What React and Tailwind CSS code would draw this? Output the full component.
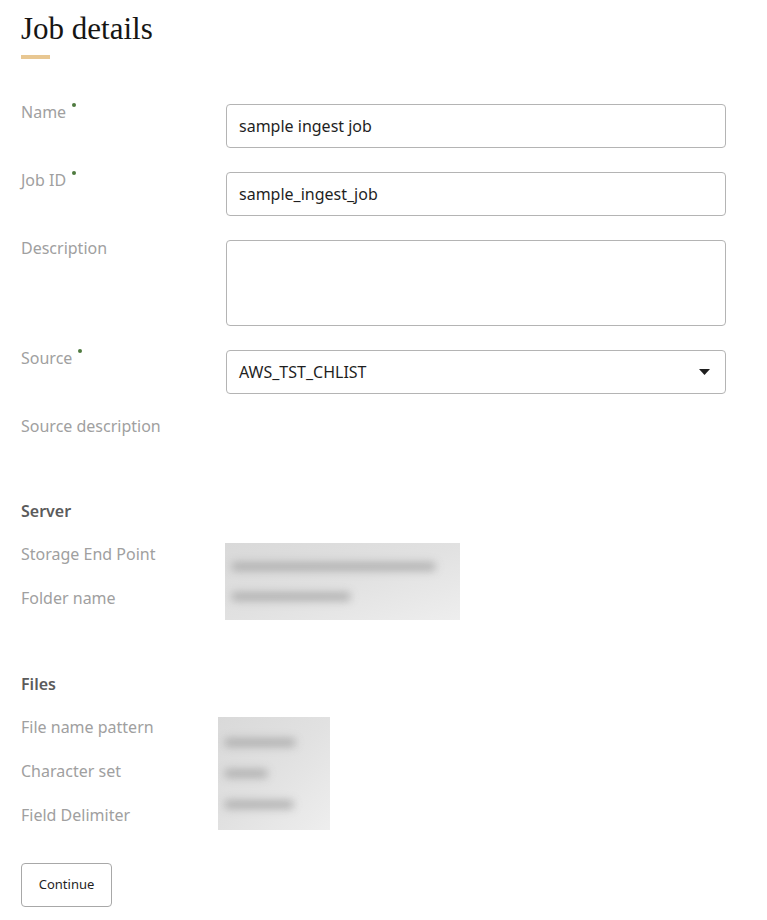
import React from "react";

const labelCls = "text-[16px] leading-[24px] text-[#a0a0a0]";

function Required() {
  return <span className="inline-block w-[4px] h-[4px] rounded-full bg-[#4f7a3f] ml-[6px] align-top mt-[3px]" />;
}

function FieldRow({ label, required, children }) {
  return (
    <div className="flex items-start mb-[20px]">
      <div className={`w-[205px] shrink-0 ${labelCls}`}>
        {label}
        {required && <Required />}
      </div>
      <div className="flex-1 pt-[4px]">{children}</div>
    </div>
  );
}

function TextBox({ value }) {
  return (
    <div className="h-[44px] border border-[#b4b4b4] rounded-[4px] px-[12px] flex items-center text-[16px] text-[#1f1f1f] bg-white">
      {value}
    </div>
  );
}

function Blurred({ className, lines }) {
  return (
    <div className={`bg-gradient-to-br from-[#d9d9d9] via-[#e1e1e1] to-[#eeeeee] overflow-hidden flex flex-col justify-around px-[6px] ${className}`}>
      {lines.map((w, i) => (
        <div key={i} className="h-[9px] rounded-full bg-[#a6a6a6] blur-[4px] opacity-80" style={{ width: w }} />
      ))}
    </div>
  );
}

export default function App() {
  return (
    <div className="bg-white min-h-[920px] pl-[21px] pr-[41px] pt-[10px]" style={{ fontFamily: "'Noto Sans', sans-serif" }}>
      <h1 className="text-[31px] leading-[38px] text-[#161513]" style={{ fontFamily: "'Liberation Serif', serif" }}>
        Job details
      </h1>
      <div className="w-[29px] h-[4px] bg-[#e8c792] mt-[7px] mb-[41px]" />

      <FieldRow label="Name" required>
        <TextBox value="sample ingest job" />
      </FieldRow>
      <FieldRow label="Job ID" required>
        <TextBox value="sample_ingest_job" />
      </FieldRow>
      <FieldRow label="Description">
        <div className="h-[86px] border border-[#b4b4b4] rounded-[4px] bg-white" />
      </FieldRow>
      <FieldRow label="Source" required>
        <div className="h-[44px] border border-[#b4b4b4] rounded-[4px] pl-[12px] pr-[15px] flex items-center justify-between text-[16px] text-[#1f1f1f]">
          <span>AWS_TST_CHLIST</span>
          <svg width="11" height="6" viewBox="0 0 11 6">
            <path d="M0 0h11L5.5 6z" fill="#1f1f1f" />
          </svg>
        </div>
      </FieldRow>
      <div className={labelCls}>Source description</div>

      <div className="mt-[61px] text-[16px] leading-[24px] font-semibold text-[#5b5b5b]">Server</div>
      <div className="flex items-start mt-[9px]">
        <div className="w-[204px] shrink-0">
          <div className={`${labelCls} h-[44px] leading-[44px]`}>Storage End Point</div>
          <div className={`${labelCls} h-[44px] leading-[44px]`}>Folder name</div>
        </div>
        <Blurred className="mt-[11px] w-[235px] h-[77px] py-[8px]" lines={["205px", "120px"]} />
      </div>

      <div className="mt-[52px] text-[16px] leading-[24px] font-semibold text-[#5b5b5b]">Files</div>
      <div className="flex items-start mt-[9px]">
        <div className="w-[197px] shrink-0">
          <div className={`${labelCls} h-[44px] leading-[44px]`}>File name pattern</div>
          <div className={`${labelCls} h-[44px] leading-[44px]`}>Character set</div>
          <div className={`${labelCls} h-[44px] leading-[44px]`}>Field Delimiter</div>
        </div>
        <Blurred className="mt-[12px] w-[112px] h-[113px] py-[10px]" lines={["72px", "44px", "70px"]} />
      </div>

      <button className="mt-[26px] w-[91px] h-[44px] border border-[#a8a8a8] rounded-[4px] bg-white text-[13px] text-[#1f1f1f]">
        Continue
      </button>
    </div>
  );
}
